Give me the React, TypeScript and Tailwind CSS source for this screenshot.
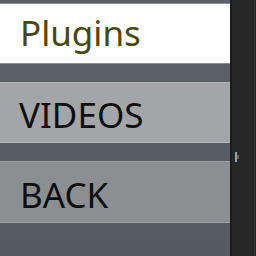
export default function App() {
  return (
    <div className="flex h-[256px] w-[256px] overflow-hidden bg-[#272727] font-['Noto_Sans',sans-serif]">
      {/* Menu column */}
      <div className="flex h-full w-[230px] flex-col bg-gradient-to-b from-[#5d6268] to-[#555a60] pt-[3px]">
        <div className="flex h-[61px] items-center border-y border-[#8a8d90] bg-white pl-[20px] text-[35px] leading-none text-[#48480c]">
          <span className="-mt-[3px]">Plugins</span>
        </div>
        <div className="mt-[18px] flex h-[61px] items-center border-y border-[#b4b6b8] bg-[#a3a5a8] pl-[19px] text-[35px] leading-none text-[#0e0e0e]">
          <span className="mt-[4px]">VIDEOS</span>
        </div>
        <div className="mt-[18px] flex h-[62px] items-center border-y border-[#9c9fa2] bg-[#8c8f92] pl-[20px] text-[35px] leading-none text-[#0e0e0e]">
          <span className="mt-[4px]">BACK</span>
        </div>
      </div>
      {/* Side strip */}
      <div className="relative h-full flex-1 border-l-2 border-[#1b1b1b]">
        <div className="absolute left-[3px] top-[152px] flex h-[10px] w-[4px] items-center">
          <div className="h-full w-[2px] bg-[#8fa3b8]" />
          <div className="h-[4px] w-[2px] bg-[#6e5a4a]" />
        </div>
        <div className="absolute right-[1px] top-0 h-full w-[1px] bg-[#333333]" />
      </div>
    </div>
  )
}
